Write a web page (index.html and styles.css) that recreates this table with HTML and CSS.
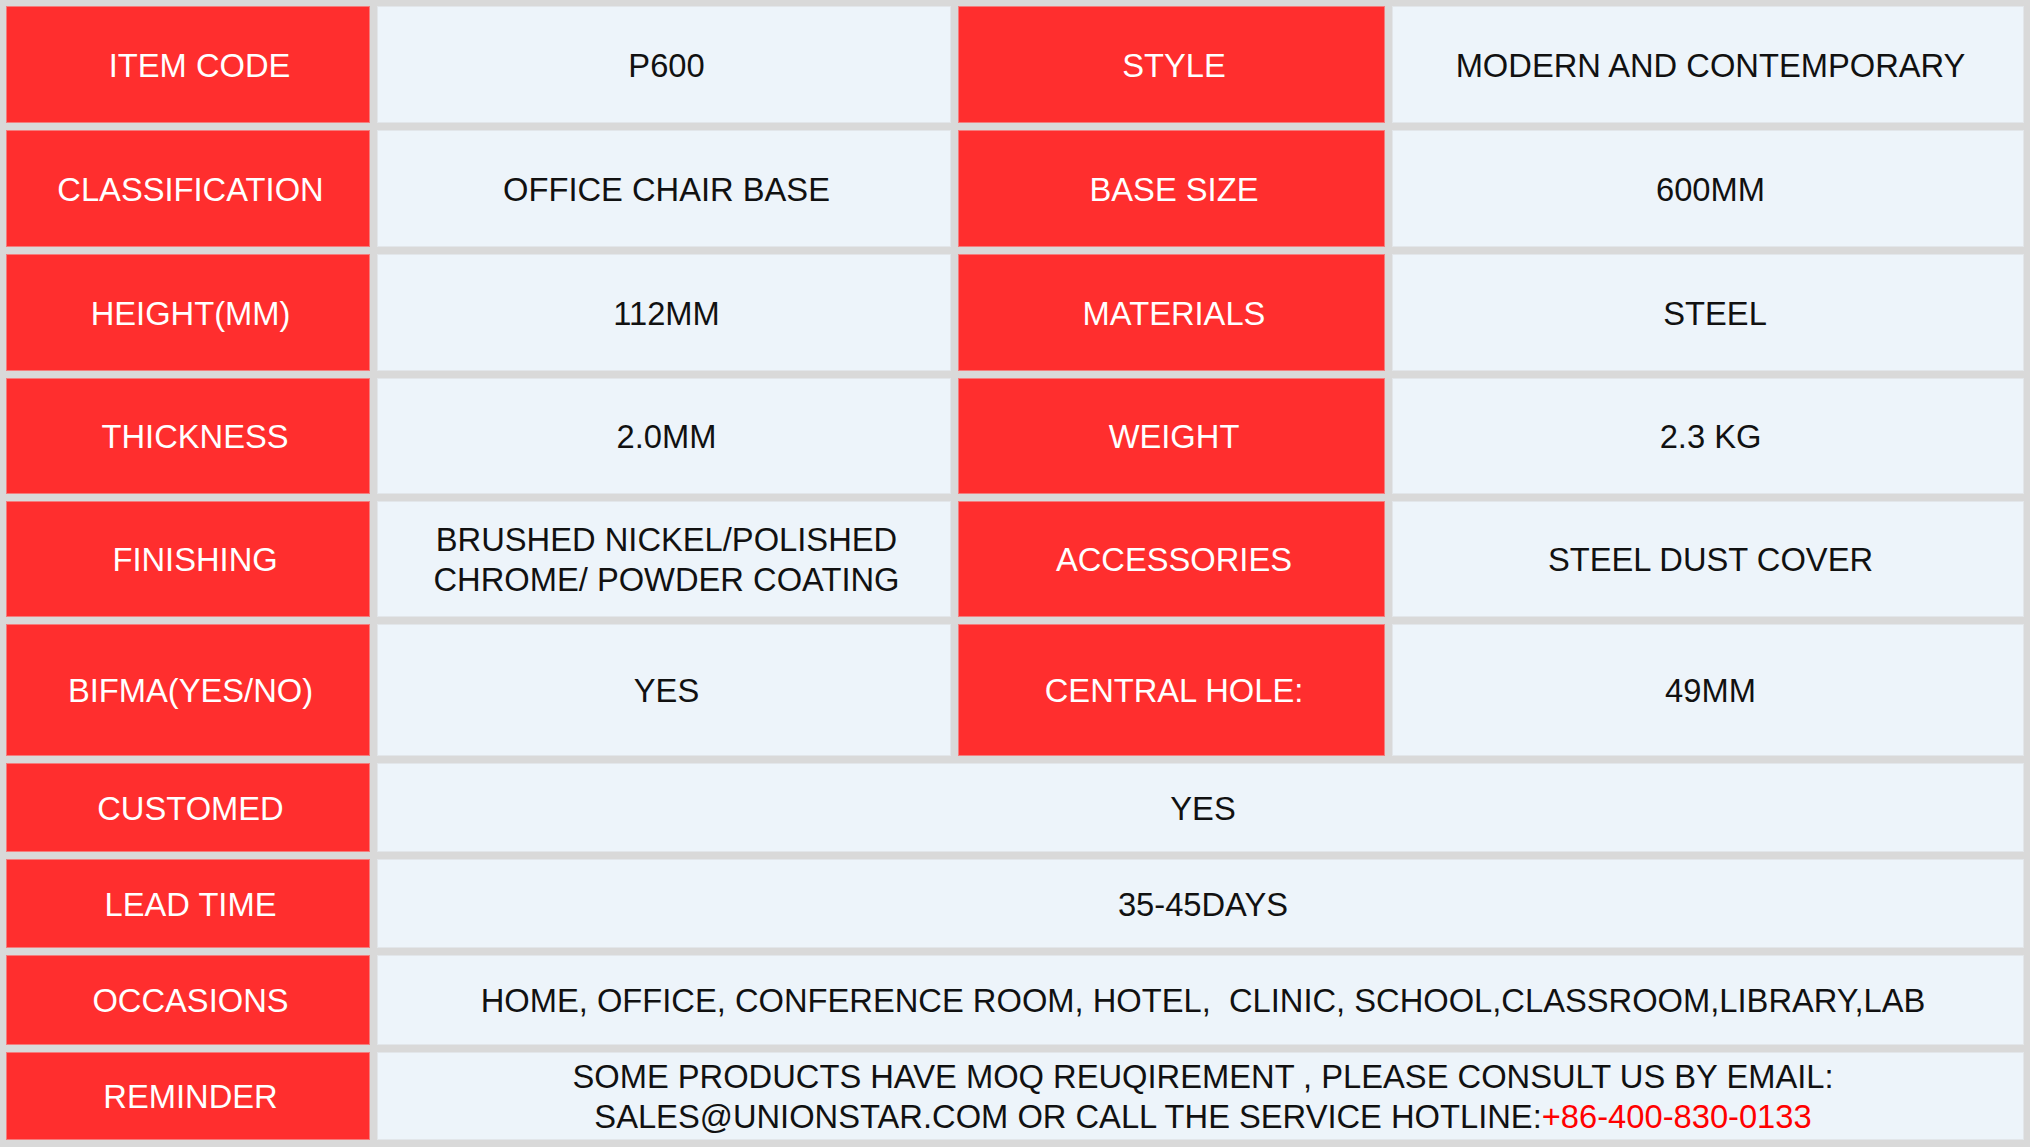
FILE: index.html
```html
<!DOCTYPE html>
<html lang="en">
<head>
<meta charset="utf-8">
<title>P600 Specifications</title>
<link rel="stylesheet" href="styles.css">
</head>
<body>
<div class="spec">
  <div class="cell label"><span>&nbsp;&nbsp;ITEM CODE</span></div>
  <div class="cell value"><span>P600</span></div>
  <div class="cell label"><span>STYLE</span></div>
  <div class="cell value"><span>MODERN AND CONTEMPORARY</span></div>

  <div class="cell label"><span>CLASSIFICATION</span></div>
  <div class="cell value"><span>OFFICE CHAIR BASE</span></div>
  <div class="cell label"><span>BASE SIZE</span></div>
  <div class="cell value"><span>600MM</span></div>

  <div class="cell label"><span>HEIGHT(MM)</span></div>
  <div class="cell value"><span>112MM</span></div>
  <div class="cell label"><span>MATERIALS</span></div>
  <div class="cell value"><span>&nbsp;STEEL</span></div>

  <div class="cell label"><span>&nbsp;THICKNESS</span></div>
  <div class="cell value"><span>2.0MM</span></div>
  <div class="cell label"><span>WEIGHT</span></div>
  <div class="cell value"><span>2.3 KG</span></div>

  <div class="cell label"><span>&nbsp;FINISHING</span></div>
  <div class="cell value"><span>BRUSHED NICKEL/POLISHED<br>CHROME/ POWDER COATING</span></div>
  <div class="cell label"><span>ACCESSORIES</span></div>
  <div class="cell value"><span>STEEL DUST COVER</span></div>

  <div class="cell label"><span>BIFMA(YES/NO)</span></div>
  <div class="cell value"><span>YES</span></div>
  <div class="cell label"><span>CENTRAL HOLE:</span></div>
  <div class="cell value"><span>49MM</span></div>

  <div class="cell label"><span>CUSTOMED</span></div>
  <div class="cell value wide"><span>YES</span></div>

  <div class="cell label"><span>LEAD TIME</span></div>
  <div class="cell value wide"><span>35-45DAYS</span></div>

  <div class="cell label"><span>OCCASIONS</span></div>
  <div class="cell value wide"><span>HOME, OFFICE, CONFERENCE ROOM, HOTEL,&nbsp; CLINIC, SCHOOL,CLASSROOM,LIBRARY,LAB</span></div>

  <div class="cell label"><span>REMINDER</span></div>
  <div class="cell value wide"><span>SOME PRODUCTS HAVE MOQ REUQIREMENT , PLEASE CONSULT US BY EMAIL:<br>SALES@UNIONSTAR.COM OR CALL THE SERVICE HOTLINE:<span class="hotline">+86-400-830-0133</span></span></div>
</div>
</body>
</html>
```

FILE: styles.css
```css
html, body {
  margin: 0;
  padding: 0;
  background: #d9d9d9;
}

.spec {
  display: grid;
  grid-template-columns: 364px 574px 427px 632px;
  grid-template-rows: 117px 117px 117px 116px 116px 132px 89px 89px 90px 88px;
  gap: 7px;
  padding: 6px 6px 7px 6px;
  width: 2030px;
  height: 1147px;
  box-sizing: border-box;
  background: #d9d9d9;
  font-family: "Liberation Sans", Arial, sans-serif;
  font-size: 32.7px;
  line-height: 40px;
}

.cell {
  box-sizing: border-box;
  display: flex;
  align-items: center;
  justify-content: center;
  text-align: center;
  padding: 2px 0 0 5px;
}

.label {
  background: #ff2e2e;
  color: #ffffff;
  border: 1px solid #f47d7d;
}

.value {
  background: #edf4fa;
  color: #111111;
  border: 1px solid #e2e6ea;
}

.wide {
  grid-column: span 3;
}

.hotline {
  color: #ff0000;
}
```
